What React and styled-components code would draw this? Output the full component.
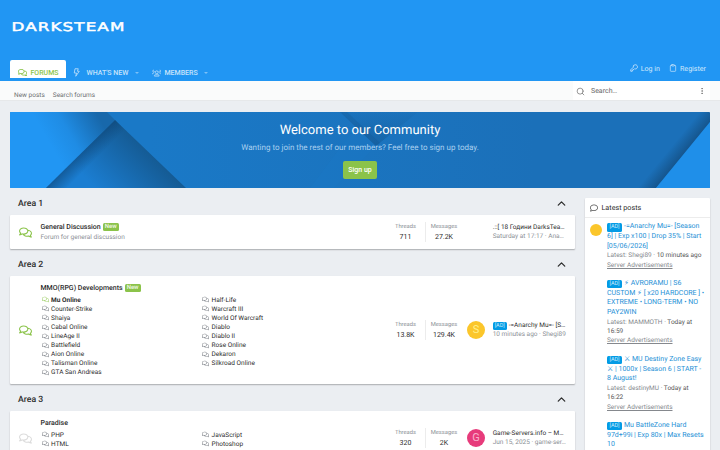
import React from "react";
import styled, { createGlobalStyle } from "styled-components";
import { FaRegComments, FaRegComment } from "react-icons/fa";
import { Clipboard, Search, EllipsisVertical, ChevronUp } from "lucide-react";

const areas = [
  {
    title: "Area 1",
    height: 34,
    node: {
      title: "General Discussion",
      isNew: true,
      description: "Forum for general discussion",
      threads: "711",
      messages: "27.2K",
      last: { title: ".::[ 18 Години DarksTea…", meta: "Saturday at 17:17 · Ana…" },
    },
  },
  {
    title: "Area 2",
    height: 108,
    node: {
      title: "MMO(RPG) Developments",
      isNew: true,
      children: [
        ["Mu Online", "Counter-Strike", "Shaiya", "Cabal Online", "LineAge II", "Battlefield", "Aion Online", "Talisman Online", "GTA San Andreas"],
        ["Half-Life", "Warcraft III", "World Of Warcraft", "Diablo", "Diablo II", "Rose Online", "Dekaron", "Silkroad Online"],
      ],
      threads: "13.8K",
      messages: "129.4K",
      last: { letter: "S", color: "#fbc62b", ink: "#fff08a", ad: true, title: "-=Anarchy Mu=- [S…", meta: "10 minutes ago · Shegi89" },
    },
  },
  {
    title: "Area 3",
    height: 54,
    node: {
      title: "Paradise",
      children: [
        ["PHP", "HTML"],
        ["JavaScript", "Photoshop"],
      ],
      threads: "320",
      messages: "2K",
      last: { letter: "G", color: "#e73b7b", ink: "#f9b0cb", title: "Game-Servers.info – M…", meta: "Jun 15, 2025 · game-ser…" },
    },
  },
];

const posts = [
  { lines: ["-=Anarchy Mu=- [Season", "6] | Exp x100 | Drop 35% | Start", "[05/06/2026]"], user: "Shegi89", time: ["10 minutes ago"], avatar: true },
  { lines: ["⚡ AVRORAMU | S6", "CUSTOM ⚡ [ x20 HARDCORE ] •", "EXTREME • LONG-TERM • NO", "PAY2WIN"], user: "MAMMOTH", time: ["Today at", "16:59"] },
  { lines: ["⚔ MU Destiny Zone Easy", "⚔ | 1000x | Season 6 | START -", "8 August!"], user: "destinyMU", time: ["Today at", "16:22"] },
  { lines: ["Mu BattleZone Hard", "97d+99i | Exp 80x | Max Resets", "10"] },
];

const ForumNode = ({ node, height }) => (
  <NodeCard $height={height}>
    <NodeIcon $active={node.isNew}>
      <FaRegComments />
    </NodeIcon>
    <NodeMain $top={node.children ? 7 : 0}>
      <NodeTitle>
        {node.title}
        {node.isNew && <NewLabel>New</NewLabel>}
      </NodeTitle>
      {node.description && <NodeDescription>{node.description}</NodeDescription>}
      {node.children && (
        <SubForums>
          {node.children.map((column, i) => (
            <div key={i}>
              {column.map((name) => (
                <SubForum key={name} $unread={name === "Mu Online"}>
                  <FaRegComments />
                  {name}
                </SubForum>
              ))}
            </div>
          ))}
        </SubForums>
      )}
    </NodeMain>
    <Stats>
      <Stat>
        <dt>Threads</dt>
        <dd>{node.threads}</dd>
      </Stat>
      <Stat $wide>
        <dt>Messages</dt>
        <dd>{node.messages}</dd>
      </Stat>
    </Stats>
    <LastPost>
      <AvatarSlot>
        {node.last.letter && (
          <Avatar $color={node.last.color} $ink={node.last.ink}>{node.last.letter}</Avatar>
        )}
      </AvatarSlot>
      <div>
        <LastTitle>
          {node.last.ad && <AdLabel $small>[AD]</AdLabel>}
          {node.last.title}
        </LastTitle>
        <LastMeta>{node.last.meta}</LastMeta>
      </div>
    </LastPost>
  </NodeCard>
);

const BoltIcon = () => (
  <LineIcon width="7" height="9" viewBox="0 0 14 18">
    <path d="M4 1.5H10.5L8.8 6.5H12.5L5.5 16.5L7 10H2.5Z" />
  </LineIcon>
);

const MembersIcon = () => (
  <LineIcon width="9.5" height="8" viewBox="0 0 20 16">
    <circle cx="10" cy="6.5" r="3" />
    <path d="M5 14.500V13.500C5 12 6.500 11.500 10 11.500S15 12 15 13.500V14.500Z" />
    <path d="M5.500 4.500A2 2 0 1 1 4 2M14.500 4.500A2 2 0 1 0 16 2" />
    <path d="M1 10.500V9.500C1 8.300 2 8 4.500 8M19 10.500V9.500C19 8.300 18 8 15.500 8" />
  </LineIcon>
);

const KeyIcon = () => (
  <LineIcon width="8" height="8" viewBox="0 0 16 16">
    <path d="M10.500 1.500A4.200 4.200 0 1 1 9 9.500L7.500 11H6V12.500H4.500V14.500H1.500V11.500L6.500 6.500A4.200 4.200 0 0 1 10.500 1.500Z" />
  </LineIcon>
);

const BannerArt = () => (
  <Art viewBox="0 0 700 76" preserveAspectRatio="none">
    <defs>
      <linearGradient id="base" x1="0" x2="1">
        <stop offset="0.2" stopColor="#1a79c7" />
        <stop offset="0.75" stopColor="#1b70b9" />
      </linearGradient>
      <linearGradient id="left" gradientUnits="userSpaceOnUse" x1="40" y1="32" x2="88" y2="4">
        <stop offset="0" stopColor="#2196f3" />
        <stop offset="0.4" stopColor="#1f8ce4" />
        <stop offset="1" stopColor="#1868ab" />
      </linearGradient>
      <linearGradient id="peak" gradientUnits="userSpaceOnUse" x1="85" y1="76" x2="130" y2="31">
        <stop offset="0" stopColor="#1b7ed2" />
        <stop offset="1" stopColor="#155b94" />
      </linearGradient>
      <linearGradient id="edge" gradientUnits="userSpaceOnUse" x1="70" y1="43" x2="80" y2="53">
        <stop offset="0" stopColor="#0d4170" stopOpacity="0.55" />
        <stop offset="1" stopColor="#0d4170" stopOpacity="0" />
      </linearGradient>
      <linearGradient id="corner" gradientUnits="userSpaceOnUse" x1="673" y1="43" x2="662" y2="34">
        <stop offset="0" stopColor="#144f83" stopOpacity="0.8" />
        <stop offset="1" stopColor="#144f83" stopOpacity="0" />
      </linearGradient>
      <linearGradient id="fold" x1="0" y1="1" x2="0" y2="0">
        <stop offset="0" stopColor="#12538c" stopOpacity="0.45" />
        <stop offset="1" stopColor="#12538c" stopOpacity="0.05" />
      </linearGradient>
    </defs>
    <rect width="700" height="76" fill="url(#base)" />
    <path d="M0 0H97L105 8L36 76H0Z" fill="url(#left)" />
    <path d="M105 8L176 76H36Z" fill="url(#peak)" />
    <path d="M105 8L36 76H60L117 20Z" fill="url(#edge)" />
    <path d="M330 0H408L366 34Z" fill="url(#fold)" />
    <path d="M330 0L366 34L370 31L337 0Z" fill="#12538c" opacity="0.25" />
    <path d="M366 34L324 76H300L346 15Z" fill="#1c80d0" opacity="0.15" />
    <path d="M700 10L646 76H620L683 0H700Z" fill="url(#corner)" />
    <path d="M700 10V76H646Z" fill="#1f8fe9" />
  </Art>
);

export default function App() {
  return (
    <Page>
      <GlobalStyle />
      <Header>
        <Logo viewBox="0 0 114 12">
          <text x="0.5" y="10" textLength="114" lengthAdjust="spacingAndGlyphs">
            DARKSTEAM
          </text>
        </Logo>
        <NavBar>
          <NavTab $active>
            <FaRegComments size={9} />
            FORUMS
          </NavTab>
          <NavTab $gap={6.5}>
            <BoltIcon />
            WHAT'S NEW
            <Caret />
          </NavTab>
          <NavTab $gap={3}>
            <MembersIcon />
            MEMBERS
            <Caret $far />
          </NavTab>
          <Account>
            <AccountLink>
              <KeyIcon />
              Log in
            </AccountLink>
            <AccountLink>
              <Clipboard size={8} />
              Register
            </AccountLink>
          </Account>
        </NavBar>
      </Header>
      <SubNav>
        <SubLink>New posts</SubLink>
        <SubLink>Search forums</SubLink>
        <SearchBox>
          <Search size={9} strokeWidth={1.8} />
          <span>Search…</span>
          <EllipsisVertical size={8} />
        </SearchBox>
      </SubNav>
      <Banner>
        <BannerArt />
        <BannerTitle>Welcome to our Community</BannerTitle>
        <BannerText>Wanting to join the rest of our members? Feel free to sign up today.</BannerText>
        <SignUp>Sign up</SignUp>
      </Banner>
      <Columns>
        <Main>
          {areas.map((area) => (
            <section key={area.title}>
              <AreaHeader>
                <span>{area.title}</span>
                <ChevronUp size={13} strokeWidth={2.4} />
              </AreaHeader>
              <ForumNode node={area.node} height={area.height} />
            </section>
          ))}
        </Main>
        <Sidebar>
          <SidebarHeader>
            <FaRegComment size={8} />
            Latest posts
          </SidebarHeader>
          {posts.map((post) => (
            <Post key={post.lines[0]}>
              <PostAvatar $visible={post.avatar} />
              <div>
                <PostTitle>
                  {post.lines.map((line, i) => (
                    <div key={line}>
                      {i === 0 && <AdLabel>[AD]</AdLabel>}
                      {line}
                    </div>
                  ))}
                </PostTitle>
                {post.user && (
                  <>
                    <PostMeta>
                      Latest: {post.user} · <b>{post.time[0]}</b>
                      {post.time[1] && <div><b>{post.time[1]}</b></div>}
                    </PostMeta>
                    <PostForum>Server Advertisements</PostForum>
                  </>
                )}
              </div>
            </Post>
          ))}
        </Sidebar>
      </Columns>
    </Page>
  );
}

const GlobalStyle = createGlobalStyle`
  * {
    box-sizing: border-box;
  }
  body {
    margin: 0;
    overflow: hidden;
    background: #ebeef2;
    font-family: Roboto, "Noto Sans", "DejaVu Sans", sans-serif;
    color: #2d2d2d;
    text-rendering: geometricPrecision;
  }
  dl, dt, dd, h1, h2, h3, p {
    margin: 0;
  }
  svg {
    flex-shrink: 0;
  }
`;

const Page = styled.div`
  width: 720px;
  height: 450px;
  overflow: hidden;
`;

const LineIcon = styled.svg`
  fill: none;
  stroke: currentColor;
  stroke-width: 1.6;
  stroke-linejoin: round;
`;

const Header = styled.header`
  display: flex;
  flex-direction: column;
  justify-content: space-between;
  height: 81px;
  padding: 21px 10px 0;
  background: #2196f3;
`;

const Logo = styled.svg`
  width: 114px;
  height: 12px;
  margin-left: 1px;

  text {
    font-family: "DejaVu Sans", sans-serif;
    font-size: 12px;
    letter-spacing: 0.8px;
    fill: #fff;
    stroke: #fff;
    stroke-width: 0.45;
  }
`;

const NavBar = styled.nav`
  display: flex;
  height: 21px;
`;

const NavTab = styled.div`
  display: flex;
  align-items: center;
  gap: ${(props) => props.$gap || 3.5}px;
  height: 17.5px;
  padding: ${(props) => (props.$active ? "8px 7.5px 0 8px" : "8px 6px 0 7px")};
  border-radius: 2px 2px 0 0;
  background: ${(props) => (props.$active ? "#fff" : "transparent")};
  color: ${(props) => (props.$active ? "#8bc34a" : "#c5e3fb")};
  font-size: 7px;
  font-weight: 500;
`;

const Caret = styled.i`
  margin-left: ${(props) => (props.$far ? 3 : 0)}px;
  border: 2px solid transparent;
  border-top-color: #7cc0f7;
  border-bottom: 0;
`;

const Account = styled.div`
  display: flex;
  gap: 9px;
  margin-left: auto;
  padding: 3px 4px 0 0;
`;

const AccountLink = styled.div`
  display: flex;
  align-items: center;
  gap: 3px;
  height: 10px;
  color: #d2e9fc;
  font-size: 7.1px;
`;

const SubNav = styled.div`
  display: flex;
  align-items: center;
  gap: 8px;
  height: 20px;
  padding-left: 14px;
  padding-right: 10px;
  background: #fafbfb;
  border-bottom: 1px solid #e6e8ea;
`;

const SubLink = styled.span`
  padding-top: 8px;
  font-size: 6.5px;
  color: #6d6f71;
`;

const SearchBox = styled.div`
  display: flex;
  align-items: center;
  gap: 6px;
  width: 137px;
  height: 19px;
  margin-left: auto;
  padding: 1px 4px 0 3px;
  background: #fff;
  color: #666;
  font-size: 7px;

  span {
    flex: 1;
  }
`;

const Banner = styled.div`
  position: relative;
  display: flex;
  flex-direction: column;
  align-items: center;
  height: 76px;
  margin: 11px 10px 0;
  overflow: hidden;
  border-radius: 1px;
`;

const Art = styled.svg`
  position: absolute;
  inset: 0;
  z-index: -1;
  width: 100%;
  height: 100%;
`;

const BannerTitle = styled.h1`
  padding-top: 10px;
  color: #fff;
  font-size: 13px;
  font-weight: 400;
  line-height: 18px;
`;

const BannerText = styled.p`
  padding-top: 3px;
  color: #a9d0f0;
  font-size: 8px;
  line-height: 10px;
`;

const SignUp = styled.button`
  width: 34px;
  height: 18px;
  margin-top: 7.5px;
  padding: 0;
  border: 0;
  border-radius: 2px;
  background: #8bc34a;
  color: #fff;
  font-family: inherit;
  font-size: 7px;
  font-weight: 500;
`;

const Columns = styled.div`
  display: flex;
  align-items: flex-start;
  gap: 10px;
  padding: 0 10px;
`;

const Main = styled.main`
  width: 565px;
`;

const AreaHeader = styled.h2`
  display: flex;
  align-items: center;
  justify-content: space-between;
  height: 27px;
  padding: 3px 7px 0 8px;
  font-size: 8.7px;
  font-weight: 500;

  span {
    padding-top: 1.5px;
  }
`;

const NodeCard = styled.div`
  display: flex;
  align-items: center;
  height: ${(props) => props.$height}px;
  border-radius: 1px;
  background: #fff;
  box-shadow: 0 1px 1.5px rgba(0, 0, 0, 0.28);
`;

const NodeIcon = styled.div`
  display: flex;
  width: 30.5px;
  padding-left: 9px;
  color: ${(props) => (props.$active ? "#8bc34a" : "#dcdcdc")};
  font-size: 13px;
`;

const NodeMain = styled.div`
  flex: 1;
  align-self: ${(props) => (props.$top ? "flex-start" : "center")};
  padding-top: ${(props) => props.$top}px;
`;

const NodeTitle = styled.h3`
  display: flex;
  align-items: center;
  gap: 2px;
  height: 10px;
  font-size: 7px;
  font-weight: 500;
`;

const NewLabel = styled.span`
  height: 8px;
  padding: 0 2px;
  border-radius: 1.5px;
  background: #8bc34a;
  color: #f1f8e8;
  font-size: 6px;
  line-height: 8px;
`;

const NodeDescription = styled.p`
  padding-top: 0.5px;
  color: #8c8f96;
  font-size: 6.5px;
  line-height: 10px;
`;

const SubForums = styled.div`
  display: grid;
  grid-template-columns: 160.5px 160px;
  padding-top: 2.2px;
`;

const SubForum = styled.div`
  display: flex;
  align-items: center;
  gap: 2.6px;
  height: 9.1px;
  font-size: 6.5px;
  font-weight: ${(props) => (props.$unread ? 700 : 400)};

  svg {
    width: 7px;
    height: 7px;
    margin-left: 1px;
    color: ${(props) => (props.$unread ? "#a6d274" : "#8b8f95")};
  }
`;

const Stats = styled.dl`
  display: flex;
`;

const Stat = styled.div`
  width: ${(props) => (props.$wide ? 38 : 38)}px;
  height: 20px;
  border-left: ${(props) => (props.$wide ? "1px solid #ececec" : "0")};
  text-align: center;

  dt {
    padding-top: 0.6px;
    color: #8c8f96;
    font-size: 5.8px;
    line-height: 9px;
  }
  dd {
    font-size: 7px;
    line-height: 10px;
  }
`;

const LastPost = styled.div`
  display: flex;
  align-items: center;
  width: 112.5px;
  padding-left: 4.5px;
`;

const AvatarSlot = styled.div`
  width: 25.7px;
`;

const Avatar = styled.div`
  width: 18px;
  height: 18px;
  border-radius: 50%;
  background: ${(props) => props.$color};
  color: ${(props) => props.$ink};
  font-size: 11px;
  line-height: 18px;
  text-align: center;
`;

const LastTitle = styled.div`
  height: 9px;
  font-size: 6.5px;
  line-height: 9px;
  white-space: nowrap;
`;

const LastMeta = styled.div`
  color: #8c8f96;
  font-size: 6.5px;
  line-height: 9.6px;
  white-space: nowrap;
`;

const AdLabel = styled.span`
  display: inline-block;
  width: ${(props) => (props.$small ? 14 : 15)}px;
  height: 8.5px;
  margin-right: 2px;
  border-radius: 1.5px;
  background: #039be5;
  color: #c9eafb;
  font-size: 5.5px;
  line-height: 8.5px;
  text-align: center;
  vertical-align: 0;
`;

const Sidebar = styled.aside`
  width: 125px;
  height: 270px;
  margin-top: 10px;
  background: #fff;
  border-radius: 1px;
  box-shadow: 0 1px 1.5px rgba(0, 0, 0, 0.28);
`;

const SidebarHeader = styled.h3`
  display: flex;
  align-items: center;
  gap: 3.5px;
  height: 20px;
  padding-left: 5px;
  border-bottom: 1px solid #ececec;
  font-size: 7.2px;
  font-weight: 400;

  svg {
    color: #555;
  }
`;

const Post = styled.div`
  display: flex;
  gap: 5px;
  padding: 4px 0 4.5px 5px;
  white-space: nowrap;
`;

const PostAvatar = styled.div`
  visibility: ${(props) => (props.$visible ? "visible" : "hidden")};
  flex-shrink: 0;
  width: 12px;
  height: 12px;
  margin-top: 2px;
  border-radius: 50%;
  background: #fbc62b;
`;

const PostTitle = styled.div`
  color: #2590d6;
  font-size: 7px;
  line-height: 9.8px;

  div {
    height: 9.8px;
  }
`;

const PostMeta = styled.div`
  color: #85888d;
  font-size: 6.5px;
  line-height: 9.2px;

  b {
    color: #555;
    font-weight: 400;
  }
`;

const PostForum = styled.div`
  color: #85888d;
  font-size: 6.5px;
  line-height: 9.8px;
  text-decoration: underline;
`;
